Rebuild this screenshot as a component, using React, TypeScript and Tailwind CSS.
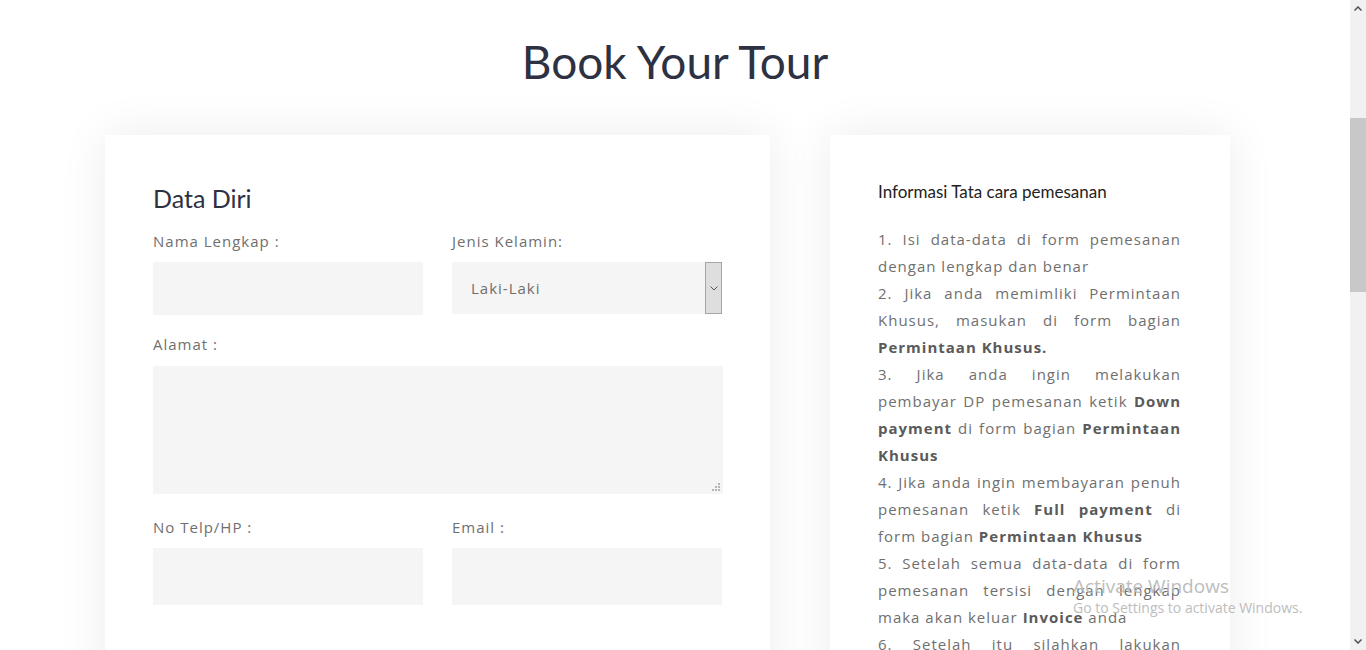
import React from 'react'

const label = 'block text-[15px] leading-[22px] tracking-[1px] text-[#6f6f6f]'
const field = 'block w-full bg-[#f5f5f5] outline-none'

const Steps = () => (
  <p className="text-justify text-[15px] leading-[27px] tracking-[1px] text-[#6f6f6f]">
    1. Isi data-data di form pemesanan dengan lengkap dan benar
    <br />
    2. Jika anda memimliki Permintaan Khusus, masukan di form bagian{' '}
    <b className="text-[#5a5a5a]">Permintaan Khusus.</b>
    <br />
    3. Jika anda ingin melakukan pembayar DP pemesanan ketik <b className="text-[#5a5a5a]">Down payment</b> di form
    bagian <b className="text-[#5a5a5a]">Permintaan Khusus</b>
    <br />
    4. Jika anda ingin membayaran penuh pemesanan ketik <b className="text-[#5a5a5a]">Full payment</b> di form
    bagian <b className="text-[#5a5a5a]">Permintaan Khusus</b>
    <br />
    5. Setelah semua data-data di form pemesanan tersisi dengan lengkap maka akan keluar{' '}
    <b className="text-[#5a5a5a]">Invoice</b> anda
    <br />
    6. Setelah itu silahkan lakukan pembayaran sesuai dengan nominal yang tertera pada invoice
  </p>
)

export default function App() {
  return (
    <div className="relative flex h-[650px] overflow-hidden bg-white font-['Open_Sans',sans-serif]">
      <main className="flex-1">
        <h1 className="pt-[34px] text-center font-['Lato',sans-serif] text-[46px] leading-[55px] text-[#2e3142]">
          Book Your Tour
        </h1>

        <div className="mt-[46px] flex gap-[60px] pl-[105px]">
          {/* Form */}
          <section className="w-[665px] bg-white pl-[48px] pr-[47px] pt-[48px] pb-[60px] shadow-[0_0_45px_rgba(0,0,0,0.08)]">
            <h2 className="font-['Lato',sans-serif] text-[25px] leading-[30px] text-[#2e3142]">Data Diri</h2>

            <div className="mt-[17px] grid grid-cols-[270px_270px] gap-x-[29px]">
              <div>
                <label className={label}>Nama Lengkap :</label>
                <input className={`${field} mt-[10px] h-[53px]`} />
              </div>
              <div>
                <label className={label}>Jenis Kelamin:</label>
                <div className="relative mt-[10px] h-[52px]">
                  <select className="h-full w-full appearance-none bg-[#f5f5f5] pl-[19px] text-[15px] tracking-[1px] text-[#6f6f6f] outline-none">
                    <option>Laki-Laki</option>
                    <option>Perempuan</option>
                  </select>
                  <div className="pointer-events-none absolute right-0 top-0 flex h-full w-[17px] items-center justify-center border border-[#a6a6a6] bg-[#dedede]">
                    <svg width="8" height="5" viewBox="0 0 8 5" fill="none">
                      <path d="M0.5 0.5 L4 4 L7.5 0.5" stroke="#555" strokeWidth="1" />
                    </svg>
                  </div>
                </div>
              </div>
            </div>

            <div className="mt-[18px]">
              <label className={label}>Alamat :</label>
              <div className="relative mt-[11px]">
                <textarea className={`${field} h-[128px] resize-none`} />
                <div className="pointer-events-none absolute bottom-[3px] right-[3px] grid grid-cols-3 gap-[1px]">
                  <span />
                  <span />
                  <span className="h-[2px] w-[2px] bg-[#b5b5b5]" />
                  <span />
                  <span className="h-[2px] w-[2px] bg-[#b5b5b5]" />
                  <span className="h-[2px] w-[2px] bg-[#b5b5b5]" />
                  <span className="h-[2px] w-[2px] bg-[#b5b5b5]" />
                  <span className="h-[2px] w-[2px] bg-[#b5b5b5]" />
                  <span className="h-[2px] w-[2px] bg-[#b5b5b5]" />
                </div>
              </div>
            </div>

            <div className="mt-[22px] grid grid-cols-[270px_270px] gap-x-[29px]">
              <div>
                <label className={label}>No Telp/HP :</label>
                <input className={`${field} mt-[10px] h-[57px]`} />
              </div>
              <div>
                <label className={label}>Email :</label>
                <input className={`${field} mt-[10px] h-[57px]`} />
              </div>
            </div>
          </section>

          {/* Info */}
          <aside className="w-[400px] self-start bg-white pl-[48px] pr-[49px] pt-[47px] pb-[48px] shadow-[0_0_45px_rgba(0,0,0,0.08)]">
            <h3 className="font-['Lato',sans-serif] text-[17px] leading-[20px] text-[#222]">
              Informasi Tata cara pemesanan
            </h3>
            <div className="mt-[24px]">
              <Steps />
            </div>
          </aside>
        </div>
      </main>

      {/* scrollbar */}
      <div className="flex w-[16px] flex-col bg-[#f1f1f1]">
        <div className="flex h-[17px] items-center justify-center">
          <svg width="8" height="5" viewBox="0 0 8 5" fill="none">
            <path d="M0.5 4.5 L4 1 L7.5 4.5" stroke="#505050" strokeWidth="1.5" />
          </svg>
        </div>
        <div className="mt-[101px] h-[174px] bg-[#c8c8c8]" />
        <div className="flex-1" />
        <div className="flex h-[17px] items-center justify-center">
          <svg width="8" height="5" viewBox="0 0 8 5" fill="none">
            <path d="M0.5 0.5 L4 4 L7.5 0.5" stroke="#505050" strokeWidth="1.5" />
          </svg>
        </div>
      </div>

      {/* OS watermark */}
      <div className="pointer-events-none absolute left-[1073px] top-[574px] font-['Open_Sans',sans-serif] text-[#bdbdbd]">
        <div className="text-[19px] leading-[24px]">Activate Windows</div>
        <div className="text-[14px] leading-[20px]">Go to Settings to activate Windows.</div>
      </div>
    </div>
  )
}
